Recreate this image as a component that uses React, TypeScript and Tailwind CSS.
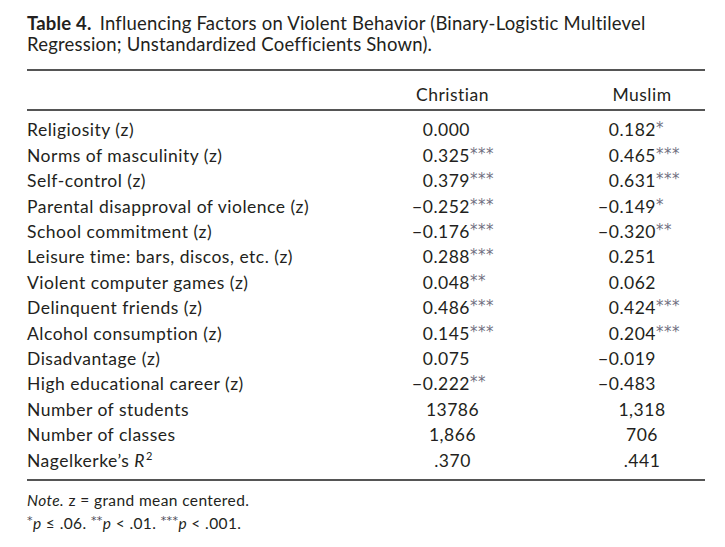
import React from "react";

type Row = { label: React.ReactNode; c: [string, string]; m: [string, string] };

const rows: Row[] = [
  { label: "Religiosity (z)", c: ["0.000", ""], m: ["0.182", "*"] },
  { label: "Norms of masculinity (z)", c: ["0.325", "***"], m: ["0.465", "***"] },
  { label: "Self-control (z)", c: ["0.379", "***"], m: ["0.631", "***"] },
  { label: "Parental disapproval of violence (z)", c: ["\u22120.252", "***"], m: ["\u22120.149", "*"] },
  { label: "School commitment (z)", c: ["\u22120.176", "***"], m: ["\u22120.320", "**"] },
  { label: "Leisure time: bars, discos, etc. (z)", c: ["0.288", "***"], m: ["0.251", ""] },
  { label: "Violent computer games (z)", c: ["0.048", "**"], m: ["0.062", ""] },
  { label: "Delinquent friends (z)", c: ["0.486", "***"], m: ["0.424", "***"] },
  { label: "Alcohol consumption (z)", c: ["0.145", "***"], m: ["0.204", "***"] },
  { label: "Disadvantage (z)", c: ["0.075", ""], m: ["\u22120.019", ""] },
  { label: "High educational career (z)", c: ["\u22120.222", "**"], m: ["\u22120.483", ""] },
];

const counts: { label: React.ReactNode; c: string; m: string }[] = [
  { label: "Number of students", c: "13786", m: "1,318" },
  { label: "Number of classes", c: "1,866", m: "706" },
  {
    label: (
      <>
        Nagelkerke’s <i>R</i>
        <span className="text-[11px] relative -top-[7px] ml-[1px]">2</span>
      </>
    ),
    c: ".370",
    m: ".441",
  },
];

function Stars({ s }: { s: string }) {
  return (
    <span
      className="text-[15px] text-[#6f6f80] tracking-[0.5px] relative -top-[1px]"
      style={{ fontFamily: "'DejaVu Sans', sans-serif" }}
    >
      {s}
    </span>
  );
}

function FStars({ s }: { s: string }) {
  return (
    <span
      className="text-[11px] relative -top-[5px] text-[#4a4a55]"
      style={{ fontFamily: "'DejaVu Sans', sans-serif" }}
    >
      {s}
    </span>
  );
}

export default function App() {
  return (
    <div
      className="w-[725px] h-[547px] bg-white text-[#231f20] pl-[27px] pt-[13px]"
      style={{ fontFamily: "Lato, 'Open Sans', sans-serif" }}
    >
      <div className="text-[18.5px] leading-[21px] tracking-[0.2px] w-[680px]">
        <span className="font-bold">Table 4.</span>
        <span className="ml-[8px]">Influencing Factors on Violent Behavior (Binary-Logistic Multilevel</span>
        <br />
        Regression; Unstandardized Coefficients Shown).
      </div>

      <div className="w-[678px] h-[2px] bg-[#555] mt-[14px]" />

      <div className="grid grid-cols-[353px_145px_42px_150px] text-[17.5px] tracking-[0.5px] leading-[25.4px] pt-[11px] pb-[2px]">
        <div />
        <div className="text-center">Christian</div>
        <div />
        <div className="text-center">Muslim</div>
      </div>

      <div className="w-[678px] h-[2px] bg-[#555]" />

      <div className="grid grid-cols-[353px_145px_42px_150px] text-[17.5px] tracking-[0.5px] leading-[25.4px] pt-[6px]">
        {rows.map((r, i) => (
          <React.Fragment key={i}>
            <div>{r.label}</div>
            <div className="flex">
              <span className="w-[90px] text-right">{r.c[0]}</span>
              <Stars s={r.c[1]} />
            </div>
            <div />
            <div className="flex">
              <span className="w-[89px] text-right">{r.m[0]}</span>
              <Stars s={r.m[1]} />
            </div>
          </React.Fragment>
        ))}
        {counts.map((r, i) => (
          <React.Fragment key={"c" + i}>
            <div>{r.label}</div>
            <div className="text-center">{r.c}</div>
            <div />
            <div className="text-center">{r.m}</div>
          </React.Fragment>
        ))}
      </div>

      <div className="w-[678px] h-[2px] bg-[#555] mt-[4px]" />

      <div className="text-[15.5px] tracking-[0.4px] leading-[23px] mt-[8px]">
        <div>
          <i>Note.</i> z = grand mean centered.
        </div>
        <div>
          <FStars s="*" />
          <i>p</i> ≤ .06. <FStars s="**" />
          <i>p</i> &lt; .01. <FStars s="***" />
          <i>p</i> &lt; .001.
        </div>
      </div>
    </div>
  );
}
